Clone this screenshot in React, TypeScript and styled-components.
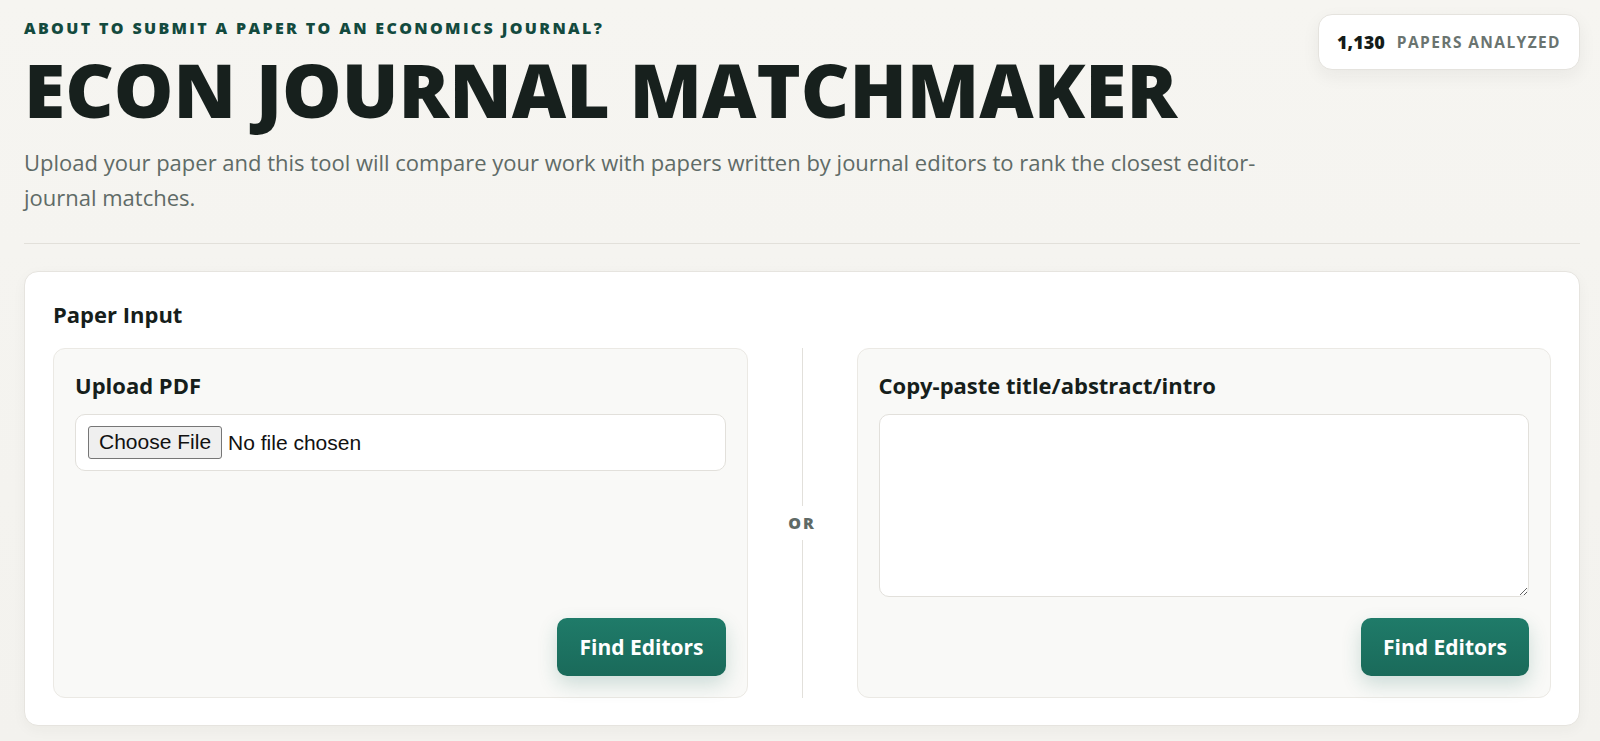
import React, { useState } from 'react';
import styled, { createGlobalStyle } from 'styled-components';

const GlobalStyle = createGlobalStyle`
  * {
    box-sizing: border-box;
  }

  body {
    margin: 0;
    background: #f5f4f0;
    font-family: 'Open Sans', 'Noto Sans', sans-serif;
    color: #16201c;
  }
`;

const Page = styled.div`
  min-height: 741px;
  padding: 14px 20px 14px 24px;
  background: linear-gradient(180deg, #f6f5f1 0%, #f3f2ee 100%);
`;

const Header = styled.header`
  display: flex;
  justify-content: space-between;
  align-items: flex-start;
  padding-bottom: 28px;
  border-bottom: 1px solid #e2e0da;
`;

const Intro = styled.div`
  display: flex;
  flex-direction: column;
`;

const Eyebrow = styled.div`
  margin-top: 3px;
  font-size: 16px;
  font-weight: 800;
  letter-spacing: 2.35px;
  text-transform: uppercase;
  color: #134a3e;
`;

const Title = styled.h1`
  margin: 9px 0 0;
  font-size: 75px;
  line-height: 1.1;
  font-weight: 800;
  letter-spacing: 0;
  color: #17201d;
`;

const Lead = styled.p`
  margin: 14px 0 0;
  max-width: 1250px;
  font-size: 22px;
  line-height: 35px;
  color: #5f6b67;
`;

const StatBadge = styled.div`
  flex-shrink: 0;
  display: flex;
  align-items: center;
  gap: 12px;
  height: 56px;
  padding: 0 18px;
  background: #fff;
  border: 1px solid #e5e3de;
  border-radius: 14px;
  box-shadow: 0 6px 18px rgba(40, 40, 30, 0.06);
`;

const StatNumber = styled.span`
  font-size: 18px;
  font-weight: 800;
  color: #141c19;
`;

const StatLabel = styled.span`
  font-size: 15.5px;
  font-weight: 700;
  letter-spacing: 1.4px;
  color: #6a7470;
`;

const Card = styled.section`
  margin-top: 27px;
  padding: 27px 28px 27px;
  background: #fff;
  border: 1px solid #e6e4df;
  border-radius: 14px;
  box-shadow: 0 4px 14px rgba(40, 40, 30, 0.04);
`;

const CardTitle = styled.h2`
  margin: 0 0 19px;
  font-size: 22px;
  line-height: 30px;
  font-weight: 700;
  color: #161e1b;
`;

const InputGrid = styled.div`
  display: grid;
  grid-template-columns: 1fr 109px 1fr;
  height: 350px;
`;

const Panel = styled.div`
  display: flex;
  flex-direction: column;
  padding: 20px 21px 21px;
  background: #f9f9f7;
  border: 1px solid #ebe9e4;
  border-radius: 12px;
`;

const PanelTitle = styled.h3`
  margin: 0 0 13px;
  font-size: 22px;
  line-height: 32px;
  font-weight: 700;
  color: #161e1b;
`;

const FileBox = styled.div`
  display: flex;
  align-items: center;
  height: 57px;
  padding: 0 12px;
  background: #fff;
  border: 1px solid #e2e0db;
  border-radius: 10px;
`;

const FileInput = styled.input`
  font-family: 'Liberation Sans', Arial, sans-serif;
  font-size: 21px;
  color: #111;

  &::file-selector-button {
    height: 33px;
    margin-right: 6px;
    padding: 0 10px;
    font-family: inherit;
    font-size: 21px;
    color: #111;
    background: #efefef;
    border: 1px solid #767676;
    border-radius: 3px;
  }
`;

const TextArea = styled.textarea`
  height: 183px;
  padding: 12px;
  font-family: inherit;
  font-size: 17px;
  background: #fff;
  border: 1px solid #e2e0db;
  border-radius: 10px;
  resize: vertical;
  outline: none;
`;

const Actions = styled.div`
  flex: 1;
  display: flex;
  justify-content: flex-end;
  align-items: flex-end;
`;

const PrimaryButton = styled.button`
  height: 58px;
  padding: 0 22px;
  font-family: inherit;
  font-size: 21px;
  font-weight: 700;
  color: #fff;
  background: linear-gradient(180deg, #1f7b69 0%, #1a6a5a 100%);
  border: none;
  border-radius: 10px;
  box-shadow: 0 8px 20px rgba(26, 106, 90, 0.2);
  cursor: pointer;
`;

const Separator = styled.div`
  position: relative;
  display: flex;
  align-items: center;
  justify-content: center;

  &::before {
    content: '';
    position: absolute;
    top: 0;
    bottom: 0;
    left: 50%;
    width: 1px;
    background: #e2e0db;
  }
`;

const OrLabel = styled.span`
  position: relative;
  padding: 6px 2px;
  background: #fff;
  font-size: 16px;
  font-weight: 800;
  letter-spacing: 2px;
  color: #5f6a66;
`;

const App = () => {
  const [text, setText] = useState('');

  return (
    <>
      <GlobalStyle />
      <Page>
        <Header>
          <Intro>
            <Eyebrow>About to submit a paper to an economics journal?</Eyebrow>
            <Title>ECON JOURNAL MATCHMAKER</Title>
            <Lead>
              Upload your paper and this tool will compare your work with papers written by
              journal editors to rank the closest editor-journal matches.
            </Lead>
          </Intro>
          <StatBadge>
            <StatNumber>1,130</StatNumber>
            <StatLabel>PAPERS ANALYZED</StatLabel>
          </StatBadge>
        </Header>

        <Card>
          <CardTitle>Paper Input</CardTitle>
          <InputGrid>
            <Panel>
              <PanelTitle>Upload PDF</PanelTitle>
              <FileBox>
                <FileInput type="file" accept="application/pdf" />
              </FileBox>
              <Actions>
                <PrimaryButton>Find Editors</PrimaryButton>
              </Actions>
            </Panel>

            <Separator>
              <OrLabel>OR</OrLabel>
            </Separator>

            <Panel>
              <PanelTitle>Copy-paste title/abstract/intro</PanelTitle>
              <TextArea value={text} onChange={e => setText(e.target.value)} />
              <Actions>
                <PrimaryButton>Find Editors</PrimaryButton>
              </Actions>
            </Panel>
          </InputGrid>
        </Card>
      </Page>
    </>
  );
};

export default App;
